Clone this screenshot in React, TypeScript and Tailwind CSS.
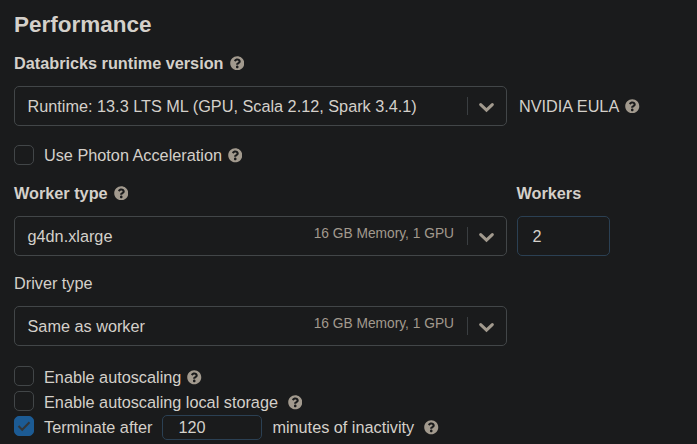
import type { ReactNode } from "react";
import { FaQuestionCircle } from "react-icons/fa";

function Help({ className = "ml-[6px]" }: { className?: string }) {
  return <FaQuestionCircle className={`size-[14.5px] shrink-0 text-[#a29a8e] ${className}`} />;
}

function Select({ value, detail }: { value: string; detail?: string }) {
  return (
    <div className="flex h-10 w-[493px] shrink-0 items-center rounded-[5px] border border-[#424648] pl-[12.5px]">
      <span>{value}</span>
      {detail && <span className="mt-[-5px] ml-auto text-[13.75px] text-[#a29a8e]">{detail}</span>}
      <span className={`h-[18px] w-px bg-[#3a3e41] ${detail ? "ml-[13px]" : "ml-auto"}`} />
      <svg className="mt-[3px] mr-[12px] ml-[11px] h-[10px] w-[15px]" viewBox="0 0 15 10" fill="none">
        <path d="M1.7 1.6 7.5 7.2 13.3 1.6" stroke="#a29a8e" strokeWidth="3" strokeLinecap="round" />
      </svg>
    </div>
  );
}

function Option({ checked, boxOffset = "mt-[-2px]", children }: { checked?: boolean; boxOffset?: string; children: ReactNode }) {
  return (
    <div className="flex h-[25px] items-center">
      <span
        className={`${boxOffset} mr-[10px] flex size-5 shrink-0 items-center justify-center rounded-[5px] border ${
          checked ? "border-[#1c5b94] bg-[#1c5b94]" : "border-[#424648]"
        }`}
      >
        {checked && (
          <svg className="size-[14px]" viewBox="0 0 14 14" fill="none">
            <path d="M1.5 7 5.2 10.8 12.5 3.3" stroke="#333638" strokeWidth="2" />
          </svg>
        )}
      </span>
      {children}
    </div>
  );
}

export default function App() {
  return (
    <main className="h-[444px] w-[697px] overflow-hidden bg-[#1a1b1c] pl-[14px] font-['Liberation_Sans',Arial,sans-serif] text-[16.25px] leading-[20px] whitespace-nowrap text-[#d4d0ca]">
      <h1 className="pt-[11px] text-[22.5px] leading-[28px] font-bold">Performance</h1>
      <div className="mt-[14px] flex h-5 items-center font-bold">
        Databricks runtime version
        <Help />
      </div>
      <div className="mt-[13px] flex items-center">
        <Select value="Runtime: 13.3 LTS ML (GPU, Scala 2.12, Spark 3.4.1)" />
        <span className="ml-3">NVIDIA EULA</span>
        <Help />
      </div>
      <div className="mt-[16px]">
        <Option boxOffset="mt-0">
          Use Photon Acceleration
          <Help className="mt-[1.5px] ml-[6px]" />
        </Option>
      </div>
      <div className="mt-[16px] flex gap-[10px]">
        <div className="w-[493px]">
          <div className="flex h-5 items-center font-bold">
            Worker type
            <Help />
          </div>
          <div className="mt-[13px]">
            <Select value="g4dn.xlarge" detail="16 GB Memory, 1 GPU" />
          </div>
        </div>
        <div>
          <div className="-ml-[0.5px] h-5 font-bold">Workers</div>
          <div className="mt-[13px] flex h-10 w-[93px] items-center rounded-[5px] border border-[#2b4053] pl-[14.5px]">2</div>
        </div>
      </div>
      <div className="mt-[17px] h-5">Driver type</div>
      <div className="mt-[13px]">
        <Select value="Same as worker" detail="16 GB Memory, 1 GPU" />
      </div>
      <div className="mt-[18px]">
        <Option>
          Enable autoscaling
          <Help className="mt-[1.5px] ml-[6px]" />
        </Option>
        <Option>
          Enable autoscaling local storage
          <Help className="mt-[1.5px] ml-[10px]" />
        </Option>
        <Option checked>
          Terminate after
          <span className="mt-[2px] ml-[10px] flex h-[25px] w-[100px] items-center rounded-[5px] border border-[#2b4053] pb-[2px] pl-[15px]">
            120
          </span>
          <span className="ml-[10px]">minutes of inactivity</span>
          <Help className="mt-[1.5px] ml-[10px]" />
        </Option>
      </div>
    </main>
  );
}
